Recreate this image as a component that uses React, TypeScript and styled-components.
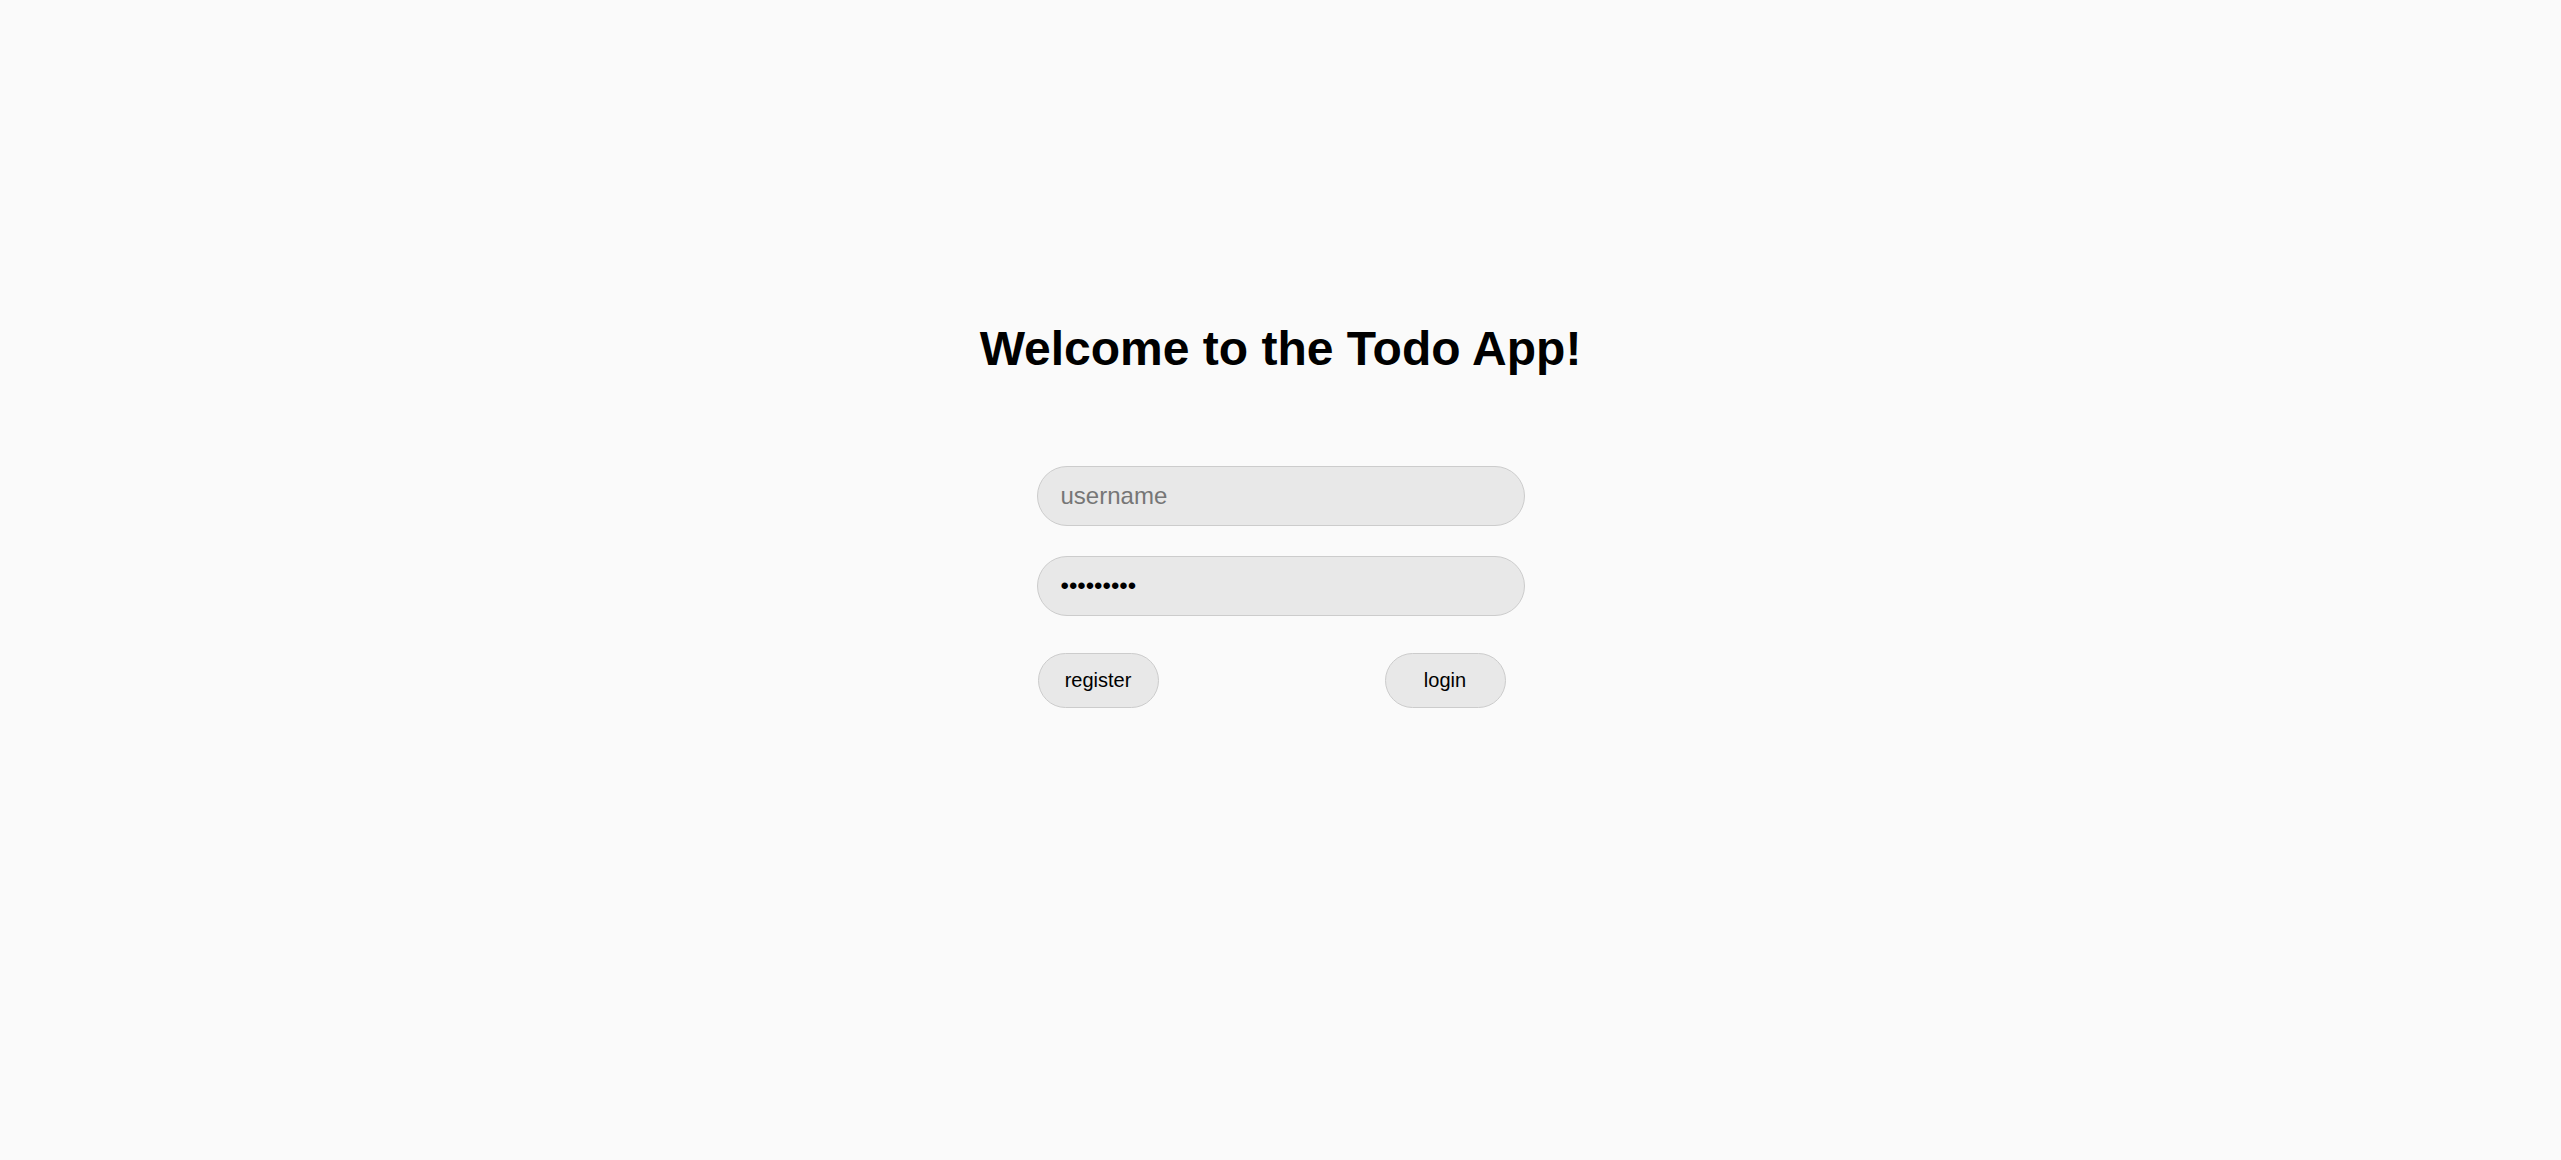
import React from "react";
import styled, { createGlobalStyle } from "styled-components";

const GlobalStyle = createGlobalStyle`
  html, body {
    margin: 0;
    padding: 0;
    background: #fafafa;
    font-family: "Liberation Sans", Arial, sans-serif;
  }
  * { box-sizing: border-box; }
`;

const Page = styled.main`
  min-height: 100vh;
  display: flex;
  flex-direction: column;
  align-items: center;
  padding-top: 321px;
  background: #fafafa;
`;

const Title = styled.h1`
  margin: 0;
  font-family: "Liberation Sans", Arial, sans-serif;
  font-weight: 700;
  font-size: 48px;
  line-height: 55px;
  color: #000;
`;

const Form = styled.form`
  width: 488px;
  margin-top: 90px;
  display: flex;
  flex-direction: column;
  gap: 30px;
`;

const Field = styled.input`
  width: 100%;
  height: 60px;
  padding: 0 23px;
  border: 1px solid #cccccc;
  border-radius: 30px;
  background: #e8e8e8;
  font-family: "Liberation Sans", Arial, sans-serif;
  font-size: 24px;
  color: #000;
  outline: none;
  &::placeholder {
    color: #767676;
  }
`;

const ButtonRow = styled.div`
  display: flex;
  justify-content: space-between;
  padding: 0 19px 0 1px;
  margin-top: 7px;
`;

const PillButton = styled.button`
  width: 121px;
  height: 55px;
  border: 1px solid #cccccc;
  border-radius: 28px;
  background: #e8e8e8;
  font-family: "Liberation Sans", Arial, sans-serif;
  font-size: 20px;
  color: #000;
  cursor: pointer;
  padding: 0;
`;

export default function App() {
  return (
    <>
      <GlobalStyle />
      <Page>
        <Title>Welcome to the Todo App!</Title>
        <Form onSubmit={(e) => e.preventDefault()}>
          <Field type="text" placeholder="username" />
          <Field type="password" defaultValue="123456789" />
          <ButtonRow>
            <PillButton type="button">register</PillButton>
            <PillButton type="submit">login</PillButton>
          </ButtonRow>
        </Form>
      </Page>
    </>
  );
}
